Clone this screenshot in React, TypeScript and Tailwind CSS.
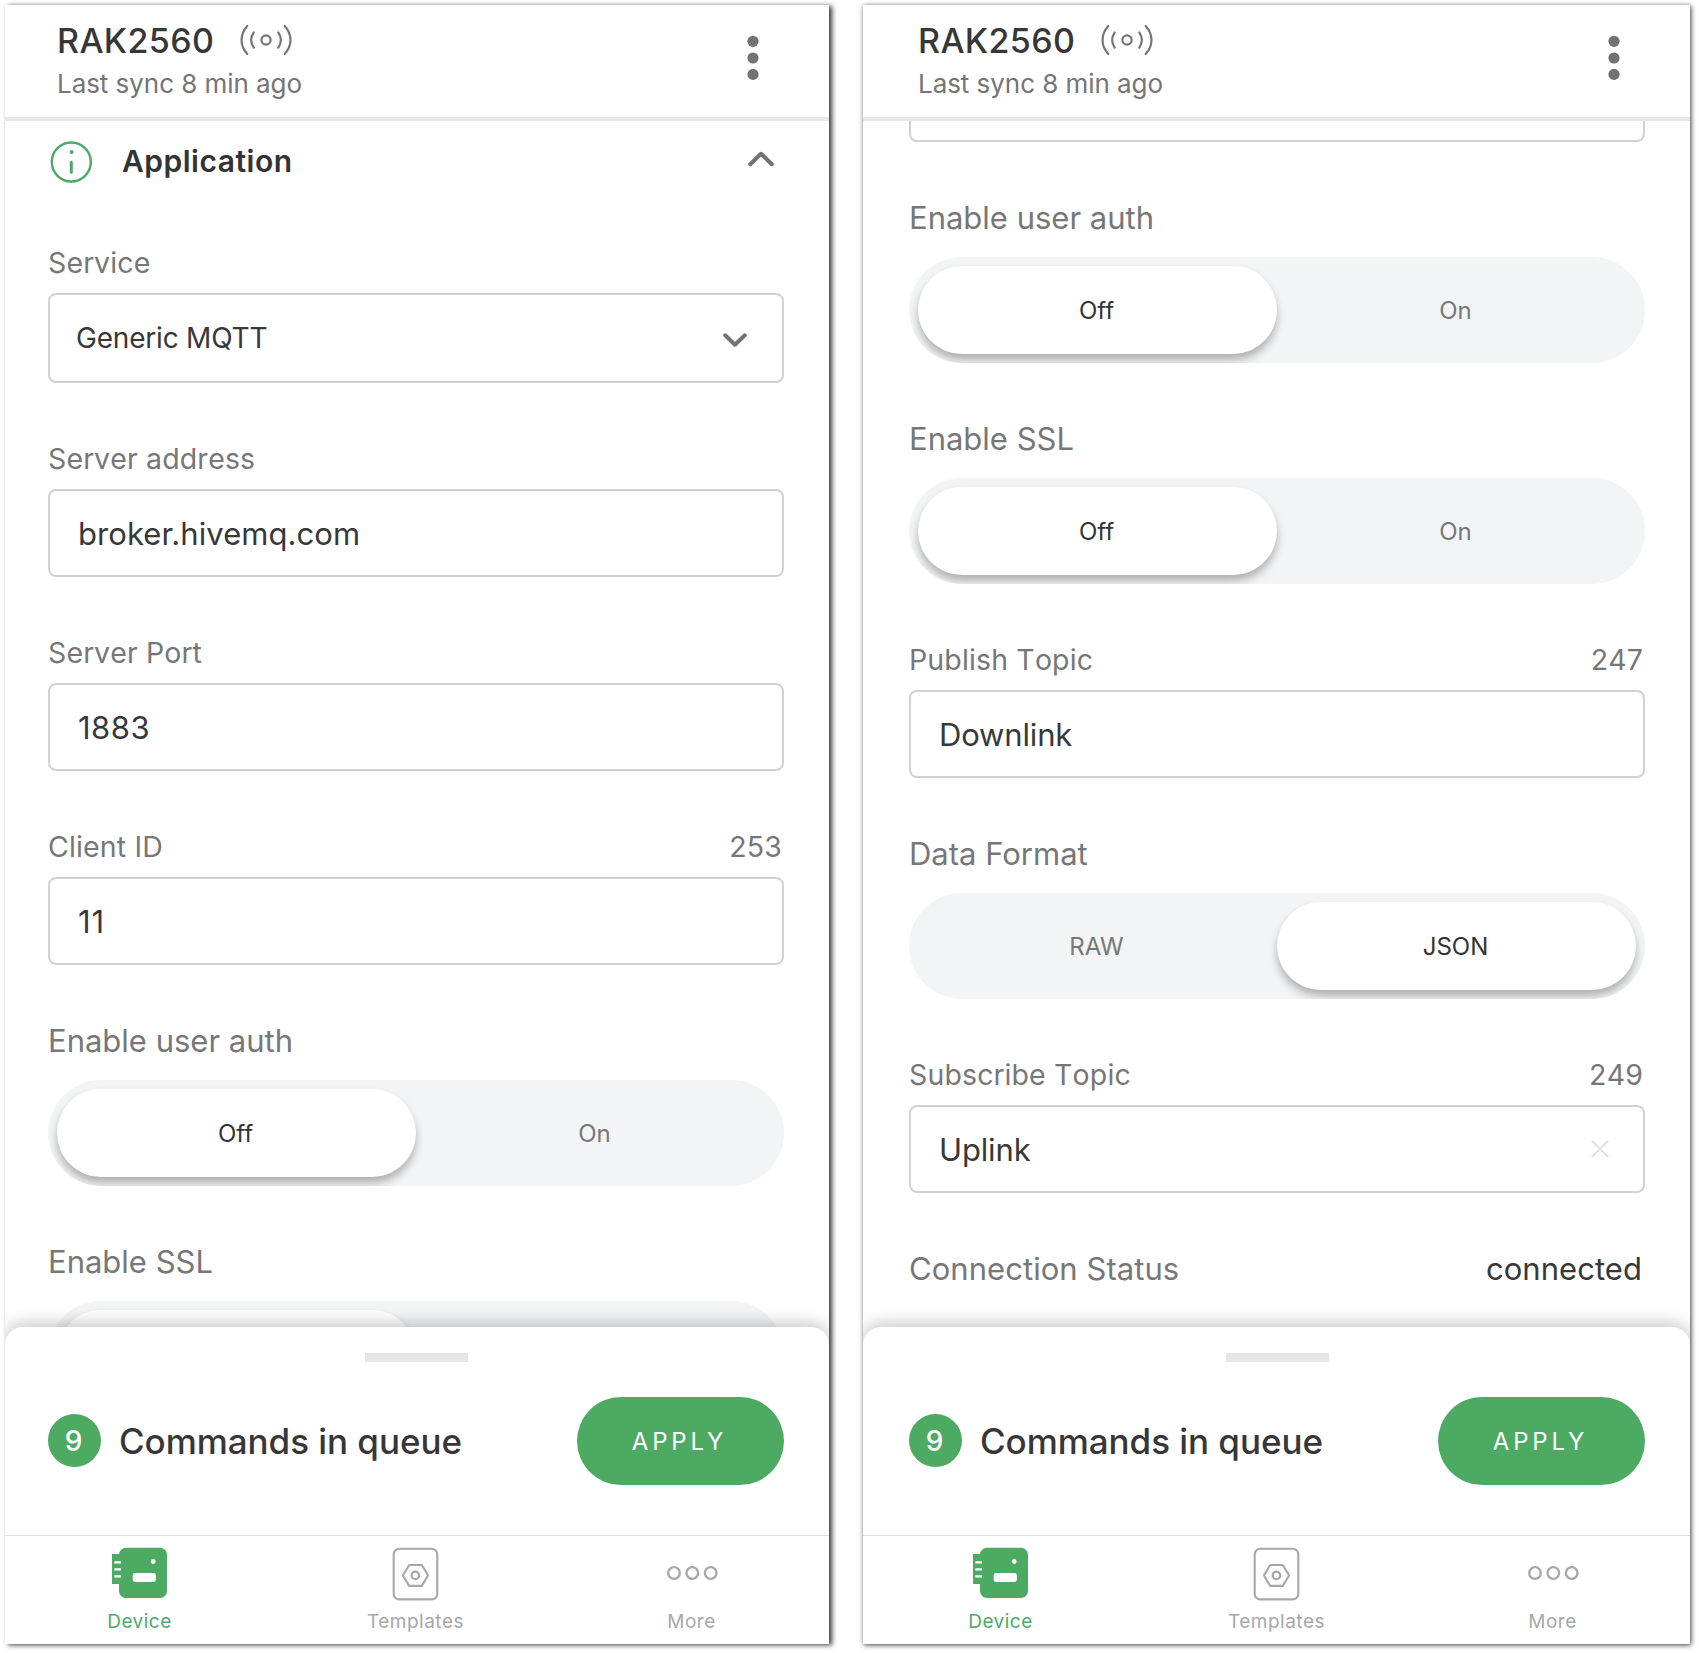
import type { ReactNode } from "react";

function SignalIcon() {
  return (
    <svg width="54" height="34" viewBox="0 0 54 34" fill="none" stroke="#757575" strokeWidth="2.2" strokeLinecap="round">
      <circle cx="27" cy="17" r="4.6" />
      <path d="M14.7 9.3c-3.2 4.8-3.2 10.6 0 15.4M39.3 9.3c3.2 4.8 3.2 10.6 0 15.4" />
      <path d="M8.3 3C.6 11.5.6 22.5 8.3 31M45.7 3c7.7 8.5 7.700 19.5 0 28" />
    </svg>
  );
}

function Header({ side }: { side: string }) {
  return (
    <header className={`flex h-[116px] shrink-0 justify-between border-b-4 border-[#e8e8e8] bg-white pr-[70px] ${side}`}>
      <div className="pt-[15px]">
        <div className="flex h-[41px] items-start">
          <h1 className="text-[34px] font-medium leading-[41px] tracking-[0.35px] text-[#373737]">RAK2560</h1>
          <div className="ml-[24.5px] mt-[3px] h-[34px]">
            <SignalIcon />
          </div>
        </div>
        <p className="mt-[7px] text-[26px] leading-[31px] tracking-[-0.05px] text-[#757575]">Last sync 8 min ago</p>
      </div>
      <svg className="mt-[30px]" width="12" height="46" viewBox="0 0 12 46" fill="#727272">
        <circle cx="6" cy="6.3" r="5.6" />
        <circle cx="6" cy="23" r="5.6" />
        <circle cx="6" cy="39.4" r="5.6" />
      </svg>
    </header>
  );
}

function SectionTitle() {
  return (
    <div className="flex h-[82px] items-center">
      <svg className="ml-px" width="44" height="44" viewBox="0 0 44 44" fill="none" stroke="#4caa68" strokeWidth="2.4">
        <circle cx="22.3" cy="22" r="19.5" />
        <circle cx="22.6" cy="12" r="2" fill="#4caa68" stroke="none" />
        <path d="M22.3 22.3v10" strokeWidth="3" strokeLinecap="round" />
      </svg>
      <h2 className="mb-[2px] ml-[29px] flex-1 text-[30px] font-semibold leading-[36px] tracking-[0.5px] text-[#333]">Application</h2>
      <svg className="mr-[10px] mt-[-6px]" width="26" height="16" viewBox="0 0 26 16" fill="none" stroke="#727272" strokeWidth="4" strokeLinecap="round" strokeLinejoin="round">
        <path d="M2.200 13.200 13 2.800l10.800 10.400" />
      </svg>
    </div>
  );
}

function InputBox({ children, tall }: { children: ReactNode; tall?: boolean }) {
  return (
    <div
      className={
        tall
          ? "flex h-[90px] items-center justify-between rounded-lg border-2 border-[#d2d2d2] pl-[26px] pr-[35px] text-[28px] leading-[34px] tracking-[-0.2px] text-[#383838]"
          : "flex h-[88px] items-center justify-between rounded-lg border-2 border-[#d2d2d2] pl-[28px] pr-[34px] pt-px text-[31px] leading-[37px] tracking-[0.07px] text-[#383838]"
      }
    >
      {children}
    </div>
  );
}

function Field({ label, count, first, children }: { label: string; count?: string; first?: boolean; children: ReactNode }) {
  return (
    <div className={first ? "mt-[44px]" : "mt-[60px]"}>
      <div className="mb-[15px] flex justify-between pr-[2px] text-[28.5px] leading-[31px] tracking-[0.14px] text-[#777] [font-kerning:none]">
        <span>{label}</span>
        <span>{count}</span>
      </div>
      {children}
    </div>
  );
}

function Toggle({ label, options, active }: { label: string; options: string[]; active: number }) {
  return (
    <div className="mt-[58px]">
      <div className="mb-[22px] text-[31px] leading-[35px] text-[#777]">{label}</div>
      <div className="flex h-[106px] overflow-hidden rounded-full bg-[#f3f4f6] p-[9px]">
        {options.map((option, i) => (
          <div
            key={i}
            className={
              i === active
                ? "flex flex-1 items-center justify-center rounded-full bg-white pr-[2px] pt-px text-[24px] leading-[29px] text-[#333] shadow-[0_6px_8px_rgba(0,0,0,0.28)]"
                : "flex flex-1 items-center justify-center pr-[2px] pt-px text-[24px] leading-[29px] text-[#777]"
            }
          >
            {option}
          </div>
        ))}
      </div>
    </div>
  );
}

function QueueSheet({ side, handle }: { side: string; handle: string }) {
  return (
    <div className="relative z-10 h-[208px] shrink-0 rounded-t-[18px] bg-white shadow-[0_-4px_16px_rgba(0,0,0,0.22)]">
      <div className={`flex justify-center pt-[26px] ${handle}`}>
        <div className="h-[9px] w-[103px] bg-[#e6e6e6]" />
      </div>
      <div className={`mt-[35px] flex h-[88px] items-center ${side}`}>
        <div className="mb-px flex h-[53px] w-[53px] items-center justify-center rounded-full bg-[#4daa63] pr-[2px] text-[28px] font-medium leading-[34px] text-white">9</div>
        <span className="ml-[18px] flex-1 text-[35px] font-medium leading-[42px] tracking-[-0.05px] text-[#373737]">Commands in queue</span>
        <button className="h-[88px] w-[207px] rounded-full bg-[#4daa63] pr-[2px] pt-px text-[24px] leading-[29px] tracking-[3.8px] text-white">APPLY</button>
      </div>
    </div>
  );
}

function DeviceIcon() {
  return (
    <svg width="60" height="60" viewBox="0 0 60 60">
      <path d="M2 11h10v30H2z" fill="#4daa63" />
      <rect x="9" y="4.8" width="48" height="50.2" rx="7" fill="#4daa63" />
      <path d="M4.3 19.4h6.8M4.3 26.4h6.8M4.3 33.4h6.8" stroke="#fff" strokeWidth="2.4" />
      <circle cx="43.2" cy="18.5" r="2.4" fill="#fff" />
      <rect x="22.7" y="30" width="23.2" height="9" rx="2.4" fill="#fff" />
    </svg>
  );
}

function TemplatesIcon() {
  return (
    <svg width="60" height="60" viewBox="0 0 60 60" fill="none" stroke="#a8a8a8" strokeWidth="2.1" strokeLinejoin="round">
      <rect x="7.7" y="5.8" width="43.6" height="50.6" rx="5.5" />
      <path d="M23.2 22h12.6l6.3 10.5-6.3 10.4H23.2l-6.3-10.4z" />
      <circle cx="29.4" cy="32.4" r="3.7" strokeWidth="2.3" />
    </svg>
  );
}

function MoreIcon() {
  return (
    <svg width="60" height="60" viewBox="0 0 60 60" fill="none" stroke="#a8a8a8" strokeWidth="2.3">
      <circle cx="12" cy="30" r="5.8" />
      <circle cx="30.3" cy="30" r="5.8" />
      <circle cx="48.7" cy="30" r="5.8" />
    </svg>
  );
}

function NavBar({ shift }: { shift: string }) {
  const items = [
    { label: "Device", icon: <DeviceIcon />, color: "text-[#4daa6a]" },
    { label: "Templates", icon: <TemplatesIcon />, color: "text-[#a8a8a8]" },
    { label: "More", icon: <MoreIcon />, color: "text-[#a8a8a8]" },
  ];
  return (
    <nav className={`relative z-10 flex h-[109px] shrink-0 justify-center overflow-hidden border-t border-[#e0e0e0] bg-white ${shift}`}>
      {items.map((item) => (
        <div key={item.label} className={`flex w-[276px] shrink-0 flex-col items-center pt-[7px] ${item.color}`}>
          {item.icon}
          <span className="mt-[7px] text-[19px] leading-[23px] tracking-[0.5px]">{item.label}</span>
        </div>
      ))}
    </nav>
  );
}

export default function App() {
  return (
    <div className="flex h-[1653px] w-[1699px] overflow-hidden bg-white pl-[5px] pt-[5px] font-['Inter',sans-serif]">
      <section className="flex h-[1639px] w-[824px] flex-col overflow-hidden bg-white shadow-[3px_1px_5px_rgba(0,0,0,0.78)]">
        <Header side="pl-[52px]" />
        <main className="h-[1206px] shrink-0 overflow-hidden pl-[43px] pr-[45px]">
          <SectionTitle />
          <Field label="Service" first>
            <InputBox tall>
              <span>Generic MQTT</span>
              <svg className="mt-[3px]" width="24" height="14" viewBox="0 0 24 14" fill="none" stroke="#727272" strokeWidth="4" strokeLinecap="round" strokeLinejoin="round">
                <path d="M2.2 2.3 12 11.7l9.8-9.4" />
              </svg>
            </InputBox>
          </Field>
          <Field label="Server address">
            <InputBox>broker.hivemq.com</InputBox>
          </Field>
          <Field label="Server Port">
            <InputBox>
              <span className="tracking-[0.5px]">1883</span>
            </InputBox>
          </Field>
          <Field label="Client ID" count="253">
            <InputBox>
              <span className="tracking-[1px]">11</span>
            </InputBox>
          </Field>
          <Toggle label="Enable user auth" options={["Off", "On"]} active={0} />
          <Toggle label="Enable SSL" options={["", ""]} active={0} />
        </main>
        <QueueSheet side="pl-[43px] pr-[45px]" handle="pr-[2px]" />
        <NavBar shift="pr-[3px]" />
      </section>

      <section className="ml-[34px] flex h-[1639px] w-[827px] flex-col overflow-hidden bg-white shadow-[1px_1px_5px_rgba(0,0,0,0.78)]">
        <Header side="pl-[55px]" />
        <main className="h-[1206px] shrink-0 overflow-hidden pl-[46px] pr-[45px]">
          <div className="mt-[-67px]">
            <InputBox>{""}</InputBox>
          </div>
          <Toggle label="Enable user auth" options={["Off", "On"]} active={0} />
          <Toggle label="Enable SSL" options={["Off", "On"]} active={0} />
          <Field label="Publish Topic" count="247">
            <InputBox>
              <span className="tracking-[-0.15px]">Downlink</span>
            </InputBox>
          </Field>
          <Toggle label="Data Format" options={["RAW", "JSON"]} active={1} />
          <Field label="Subscribe Topic" count="249">
            <InputBox>
              <span className="tracking-[-0.15px]">Uplink</span>
              <svg className="mb-[2px]" width="18" height="18" viewBox="0 0 18 18" fill="none" stroke="#e2e2e2" strokeWidth="2">
                <path d="M.7.7l16.600 16.600M17.300.7.7 17.300" />
              </svg>
            </InputBox>
          </Field>
          <div className="mt-[58px] flex justify-between pr-[3px] text-[31px] leading-[35px] tracking-[0.05px] text-[#777]">
            <span>Connection Status</span>
            <span className="text-[#383838]">connected</span>
          </div>
        </main>
        <QueueSheet side="pl-[46px] pr-[45px]" handle="pl-px" />
        <NavBar shift="pr-0" />
      </section>
    </div>
  );
}
